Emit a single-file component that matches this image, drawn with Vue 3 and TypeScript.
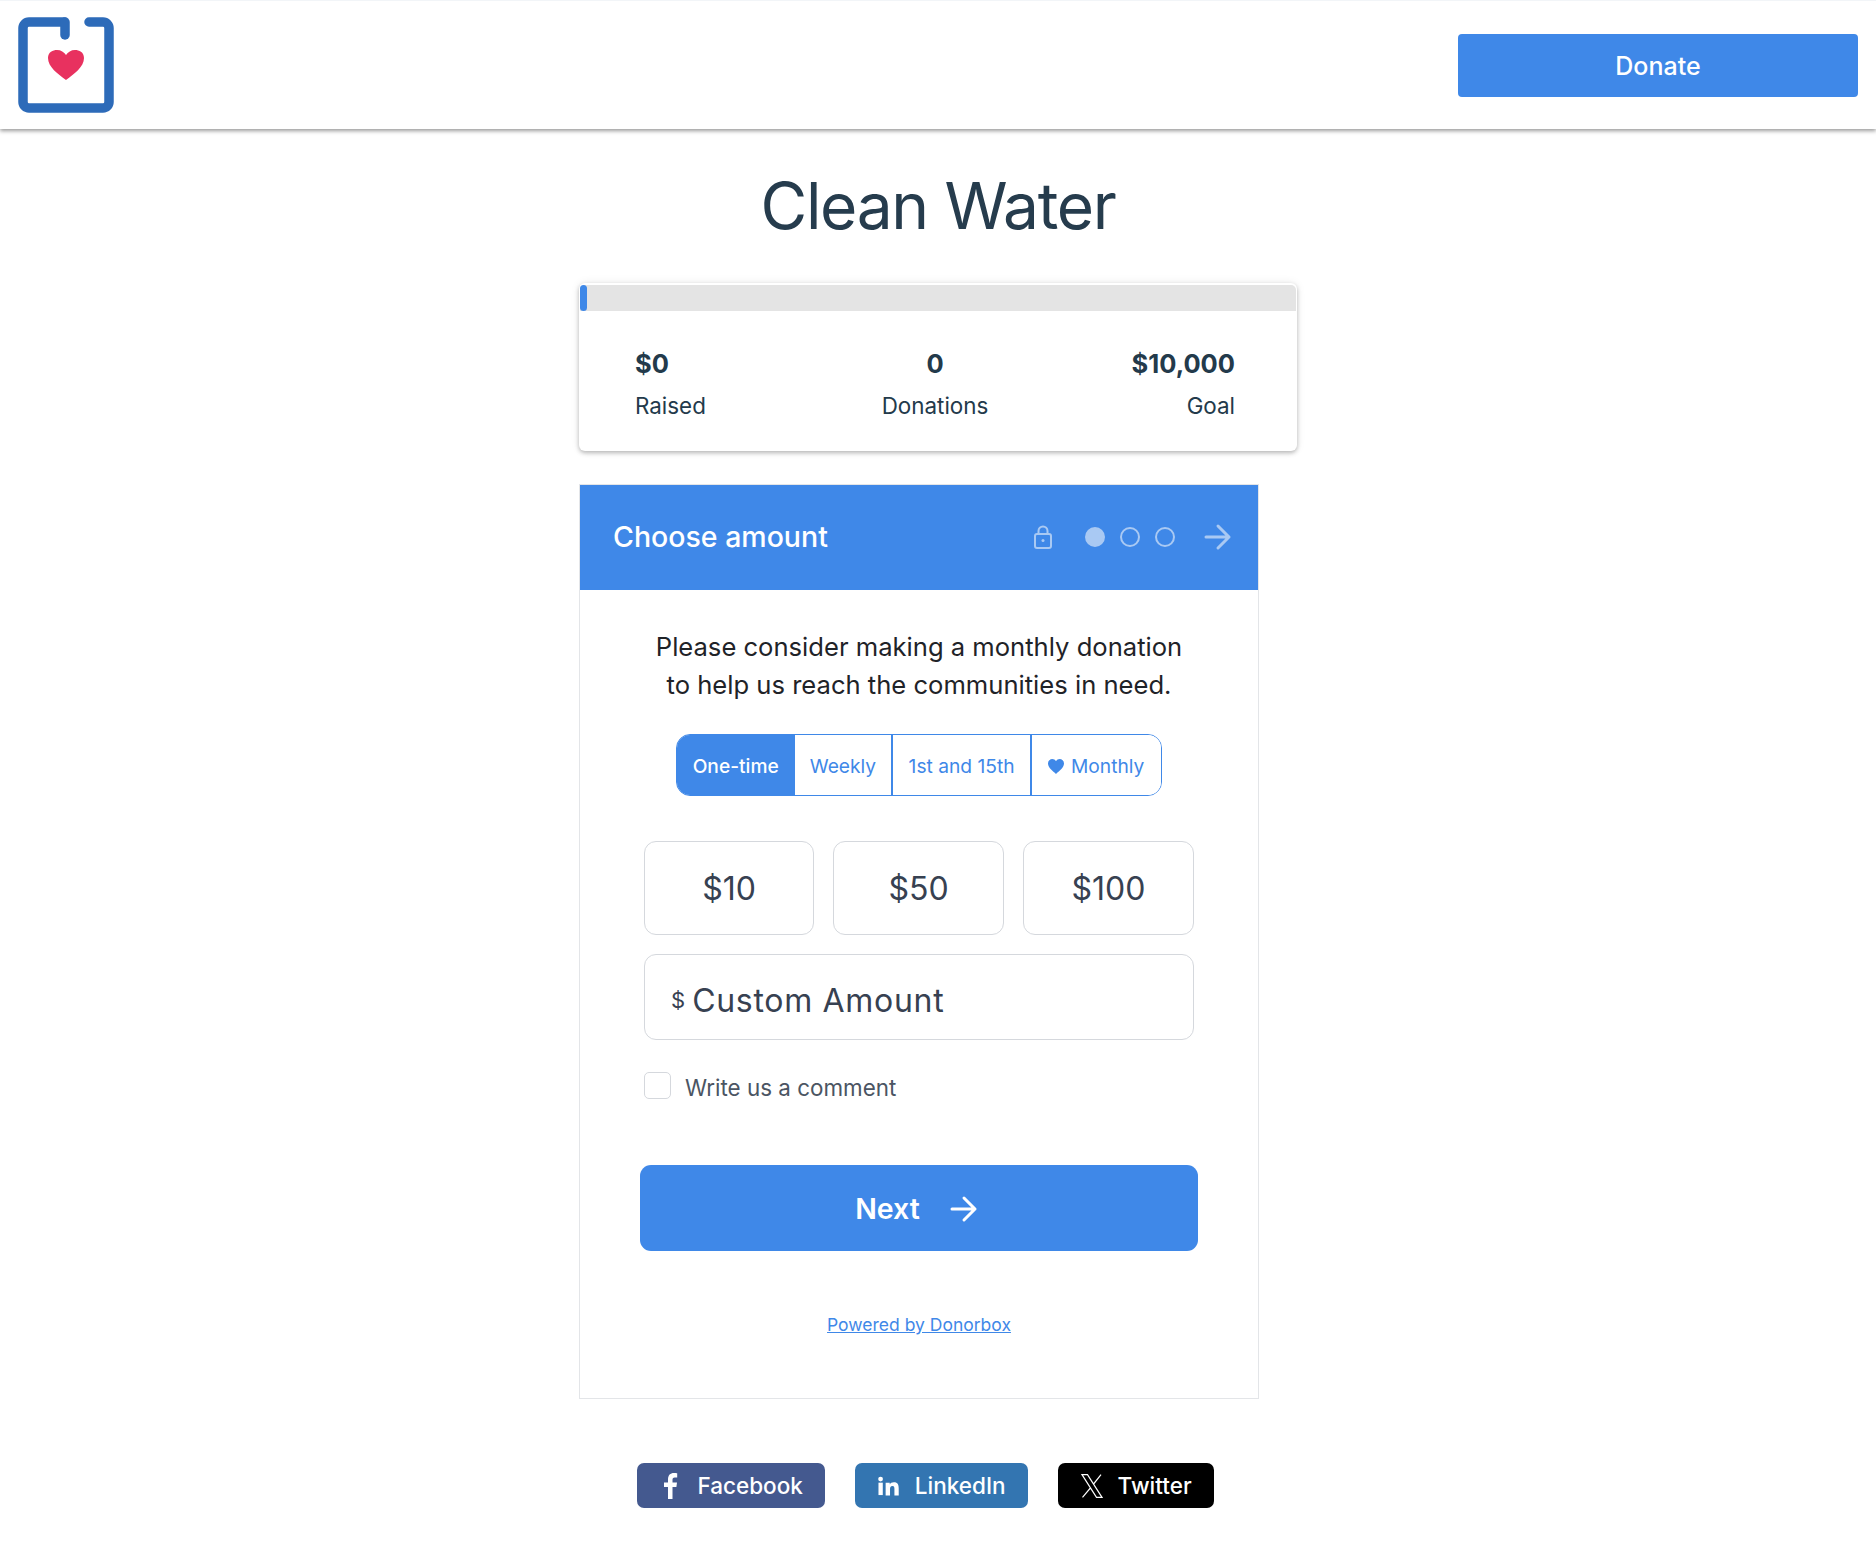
<script setup lang="ts">
const stats = [
  { value: "$0", label: "Raised", align: "left" },
  { value: "0", label: "Donations", align: "center" },
  { value: "$10,000", label: "Goal", align: "right" },
];
const amounts = ["$10", "$50", "$100"];
</script>

<template>
  <div class="page">
    <header class="topbar">
      <svg class="logo" width="96" height="96" viewBox="0 0 96 96">
        <path d="M46 5H11a6 6 0 0 0-6 6v74a6 6 0 0 0 6 6h74a6 6 0 0 0 6-6V11a6 6 0 0 0-6-6H71" fill="none" stroke="#2d6bb9" stroke-width="9.500" stroke-linecap="round" />
        <path d="M47 5v13" fill="none" stroke="#2d6bb9" stroke-width="9.500" stroke-linecap="round" />
        <path d="M48 63 C40 57 30 50 30 41 C30 35 35 33 39 33 C43 33 46 35 48 38 C50 35 53 33 57 33 C61 33 66 35 66 41 C66 50 56 57 48 63Z" fill="#e8315f" />
      </svg>
      <button class="donate">Donate</button>
    </header>

    <h1 class="title">Clean Water</h1>

    <main class="column">
      <section class="progress-card">
        <div class="track"><div class="fill"></div></div>
        <div class="stats">
          <div v-for="s in stats" :key="s.label" class="stat" :class="s.align">
            <strong>{{ s.value }}</strong>
            <span>{{ s.label }}</span>
          </div>
        </div>
      </section>

      <section class="form">
        <div class="form-head">
          <span class="form-title">Choose amount</span>
          <svg class="lock" width="20" height="24" viewBox="0 0 20 24" fill="none" stroke="#a9c9f3" stroke-width="2">
            <rect x="2" y="9" width="16" height="14" rx="2" />
            <path d="M5.500 9V6a4.500 4.500 0 0 1 9 0v3" />
            <circle cx="10" cy="15.500" r="1.500" fill="#a9c9f3" stroke="none" />
          </svg>
          <div class="dots">
            <i class="dot on"></i>
            <i class="dot"></i>
            <i class="dot"></i>
          </div>
          <svg class="head-arrow" width="28" height="28" viewBox="0 0 28 28" fill="none" stroke="#a9c9f3" stroke-width="3" stroke-linecap="round" stroke-linejoin="round">
            <path d="M2 14h23M14 3l11 11-11 11" />
          </svg>
        </div>

        <div class="form-body">
          <p class="intro">Please consider making a monthly donation<br />to help us reach the communities in need.</p>

          <div class="freq">
            <button class="freq-btn active">One-time</button>
            <button class="freq-btn weekly">Weekly</button>
            <button class="freq-btn">1st and 15th</button>
            <button class="freq-btn monthly">
              <svg width="16" height="15" viewBox="0 0 16 15"><path d="M8 15C5 12 0 9 0 4.500C0 1.500 2.200 0 4.300 0C5.800 0 7.200 .8 8 2.200C8.800 .8 10.200 0 11.700 0C13.800 0 16 1.500 16 4.500C16 9 11 12 8 15Z" fill="#3f88e8" /></svg>
              Monthly
            </button>
          </div>

          <div class="amounts">
            <button v-for="a in amounts" :key="a" class="amount">{{ a }}</button>
          </div>

          <div class="custom">
            <span class="currency">$</span>
            <span class="custom-text">Custom Amount</span>
          </div>

          <label class="comment">
            <span class="box"></span>
            <span class="comment-text">Write us a comment</span>
          </label>

          <button class="next">
            <span>Next</span>
            <svg width="28" height="28" viewBox="0 0 28 28" fill="none" stroke="#fff" stroke-width="3" stroke-linecap="round" stroke-linejoin="round">
              <path d="M2 14h23M14 3l11 11-11 11" />
            </svg>
          </button>

          <a class="powered" href="#">Powered by Donorbox</a>
        </div>
      </section>
    </main>

    <footer class="share">
      <a class="social fb" href="#">
        <span class="icon">
          <svg width="14" height="26" viewBox="0 0 14 24" preserveAspectRatio="none"><path d="M4 24V13H0V8.800h4V6C4 2 6.400 0 9.800 0c1.600 0 3 .1 3.400.2v4h-2.400C8.900 4.200 8.500 5.100 8.500 6.400v2.400h4.500l-.6 4.200H8.500v11Z" fill="#fff" /></svg>
        </span>
        Facebook
      </a>
      <a class="social li" href="#">
        <span class="icon">
          <svg width="21" height="20" viewBox="0 0 22 20" fill="#fff">
            <circle cx="2.700" cy="2.700" r="2.500" />
            <rect x=".5" y="6.500" width="4.500" height="13" />
            <path d="M8 6.500h4.300v1.900c.7-1.200 2.200-2.200 4.300-2.200 4.300 0 5.100 2.800 5.100 6.500v7.300h-4.500v-6.500c0-1.600 0-3.500-2.100-3.500s-2.500 1.600-2.500 3.400v6.600H8Z" />
          </svg>
        </span>
        LinkedIn
      </a>
      <a class="social tw" href="#">
        <span class="icon">
          <svg width="24" height="26" viewBox="0 0 24 24" fill="none" stroke="#fff" stroke-width="1.200" preserveAspectRatio="none">
            <path d="M2 1.500h5.500L22 22.500h-5.500ZM21 1.500 13.200 10.600M10.800 13.400 2.500 22.500" />
          </svg>
        </span>
        Twitter
      </a>
    </footer>
  </div>
</template>

<style scoped>
.page {
  font-family: Inter, "Liberation Sans", sans-serif;
  color: #233a4b;
  background: #fff;
  min-height: 1542px;
}

button {
  font-family: inherit;
  cursor: pointer;
}

.topbar {
  height: 129px;
  box-sizing: border-box;
  padding: 16px 18px 0;
  border-top: 1px solid #f2f5f8;
  display: flex;
  justify-content: space-between;
  align-items: flex-start;
  box-shadow: 0 2px 4px rgba(0, 0, 0, 0.4);
}

.donate {
  width: 400px;
  height: 63px;
  margin-top: 17px;
  border: none;
  border-radius: 4px;
  background: #3f88e8;
  color: #fff;
  font-size: 25px;
  font-weight: 500;
}

.title {
  margin: 37px 0 0;
  height: 117px;
  text-align: center;
  font-size: 64px;
  line-height: 80px;
  font-weight: 400;
  letter-spacing: -1.300px;
  color: #263c4d;
}

.column {
  width: 718px;
  margin: 0 auto;
}

.progress-card {
  height: 168px;
  border-radius: 6px;
  background: #fff;
  box-shadow: 0 2px 4px rgba(0, 0, 0, 0.25), 0 0 10px rgba(0, 0, 0, 0.08);
  overflow: hidden;
}

.track {
  height: 26px;
  background: #e4e4e4;
  margin: 2px 1px 0;
  border-radius: 5px 5px 0 0;
}

.fill {
  width: 7px;
  height: 100%;
  background: #3f88e8;
  border-radius: 4px;
}

.stats {
  display: grid;
  grid-template-columns: repeat(3, 1fr);
  padding: 37px 62px 0 56px;
}

.stat {
  display: flex;
  flex-direction: column;
  gap: 11px;
  font-size: 22.400px;
  line-height: 31px;
}

.stat strong {
  font-size: 25.500px;
  font-weight: 700;
}

.stat.center {
  text-align: center;
}

.stat.right {
  text-align: right;
}

.form {
  width: 680px;
  height: 915px;
  margin-top: 33px;
  box-sizing: border-box;
  border: 1px solid #e3e5e8;
}

.form-head {
  height: 105px;
  box-sizing: border-box;
  background: #3f88e8;
  display: flex;
  align-items: center;
  padding: 0 26px 2px 33px;
}

.form-title {
  flex: 1;
  color: #fff;
  font-size: 28.500px;
  font-weight: 500;
}

.lock {
  margin-right: 32px;
}

.dots {
  display: flex;
  gap: 15px;
  margin-right: 29px;
}

.dot {
  width: 20px;
  height: 20px;
  box-sizing: border-box;
  border: 2px solid #a9c9f3;
  border-radius: 50%;
}

.dot.on {
  background: #a9c9f3;
}

.form-body {
  display: flex;
  flex-direction: column;
  padding: 38px 64px 0;
}

.intro {
  margin: 0;
  text-align: center;
  font-size: 25.600px;
  line-height: 38px;
  color: #1f2328;
}

.freq {
  align-self: center;
  display: flex;
  height: 62px;
  margin-top: 30px;
  box-sizing: border-box;
  border: 1px solid #3f88e8;
  border-radius: 14px;
  overflow: hidden;
}

.freq-btn {
  display: flex;
  align-items: center;
  gap: 6px;
  padding: 2px 15.500px 0;
  border: none;
  border-left: 2px solid #3f88e8;
  background: #fff;
  color: #3f88e8;
  font-size: 19.200px;
}

.freq-btn.active {
  padding: 2px 14px 0 15.500px;
  background: #3f88e8;
  color: #fff;
  border-left: none;
  font-weight: 500;
}

.freq-btn.weekly {
  padding: 2px 15px 0;
}

.freq-btn.monthly {
  padding: 2px 16.500px 0 16px;
  gap: 7px;
}

.amounts {
  display: grid;
  grid-template-columns: 170px 171px 1fr;
  gap: 19px;
  margin-top: 45px;
}

.amount {
  height: 94px;
  border: 1px solid #d5d8dd;
  border-radius: 12px;
  background: #fff;
  color: #374151;
  font-size: 32px;
}

.custom {
  display: flex;
  align-items: center;
  gap: 7px;
  height: 86px;
  margin-top: 19px;
  box-sizing: border-box;
  padding: 6px 26px 0;
  border: 1px solid #d5d8dd;
  border-radius: 12px;
  color: #374151;
}

.currency {
  font-size: 22px;
}

.custom-text {
  font-size: 32px;
  letter-spacing: 0.7px;
}

.comment {
  display: flex;
  align-items: center;
  gap: 14px;
  margin-top: 30px;
  font-size: 22.400px;
  color: #4b5563;
}

.comment-text {
  padding-top: 4px;
}

.box {
  width: 27px;
  height: 27px;
  box-sizing: border-box;
  border: 1px solid #d5d8dd;
  border-radius: 5px;
}

.next {
  display: flex;
  align-items: center;
  justify-content: center;
  gap: 30px;
  height: 86px;
  margin: 64px -4px 0;
  padding: 0 5px 0 0;
  border: none;
  border-radius: 11px;
  background: #3f88e8;
  color: #fff;
  font-size: 28.500px;
  font-weight: 600;
}

.next svg {
  margin-top: 2px;
}

.powered {
  align-self: center;
  margin-top: 63px;
  font-size: 17.500px;
  color: #3f88e8;
}

.share {
  display: flex;
  justify-content: center;
  gap: 30px;
  margin-top: 64px;
  padding-right: 25px;
}

.social {
  display: flex;
  align-items: center;
  gap: 14px;
  height: 45px;
  padding: 0 22px;
  border-radius: 7px;
  color: #fff;
  font-size: 22.500px;
  font-weight: 500;
  text-decoration: none;
}

.icon {
  display: flex;
  justify-content: center;
  width: 24px;
}

.fb {
  background: #44598f;
}

.li {
  background: #3375b1;
}

.tw {
  background: #000;
}
</style>
